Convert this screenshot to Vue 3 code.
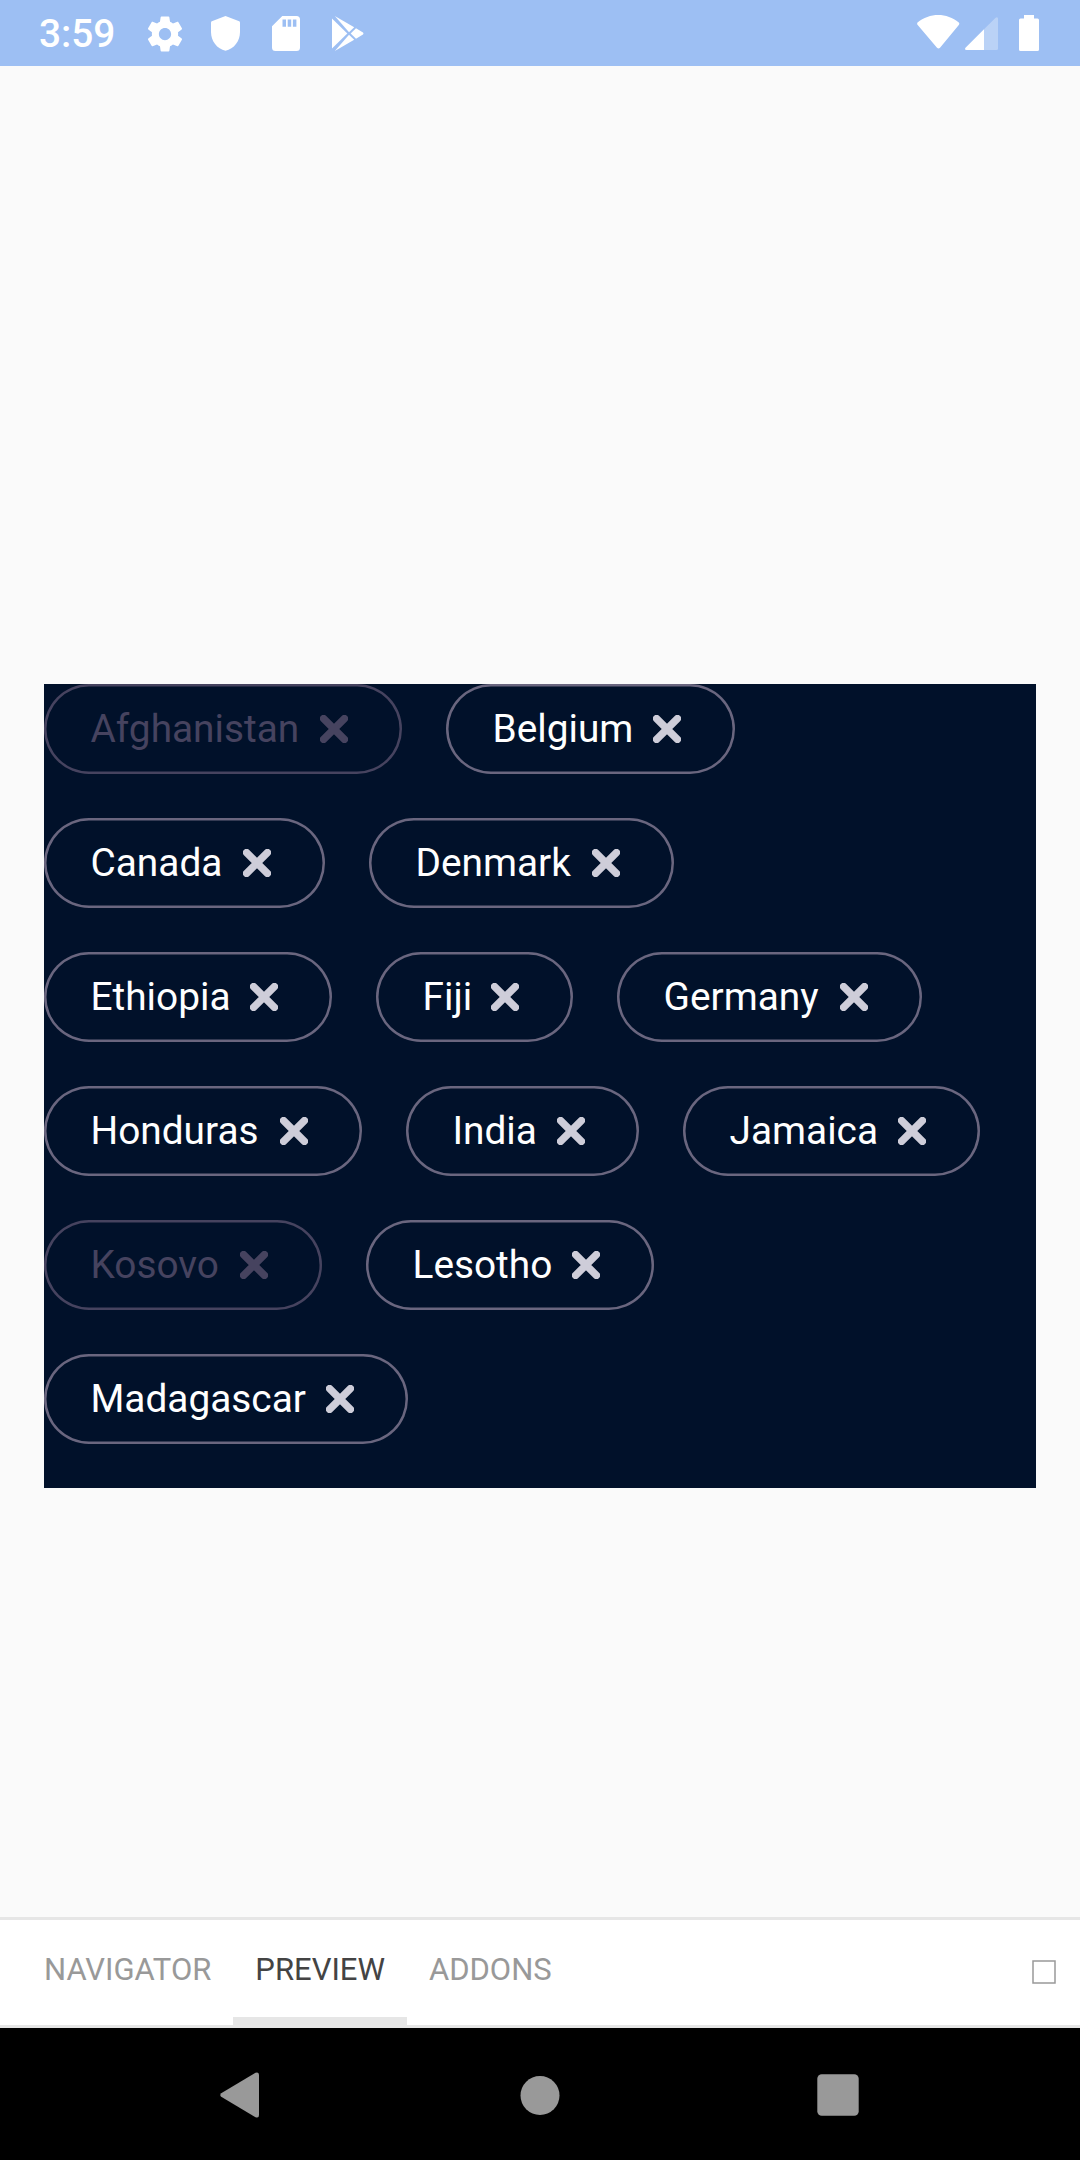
<script setup>
const rows = [
  [{ name: 'Afghanistan', width: 358, disabled: true }, { name: 'Belgium', width: 289 }],
  [{ name: 'Canada', width: 281 }, { name: 'Denmark', width: 305 }],
  [{ name: 'Ethiopia', width: 288 }, { name: 'Fiji', width: 197 }, { name: 'Germany', width: 305 }],
  [{ name: 'Honduras', width: 318 }, { name: 'India', width: 233 }, { name: 'Jamaica', width: 297 }],
  [{ name: 'Kosovo', width: 278, disabled: true }, { name: 'Lesotho', width: 288 }],
  [{ name: 'Madagascar', width: 364 }],
]
const tabs = ['NAVIGATOR', 'PREVIEW', 'ADDONS']
const activeTab = 'PREVIEW'
</script>

<template>
  <div class="screen">
    <header class="status">
      <span class="time">3:59</span>
      <svg class="gear" width="42" height="42" viewBox="0 0 24 24">
        <path d="M19.43 12.98c.04-.32.07-.64.07-.98s-.03-.66-.07-.98l2.11-1.65c.19-.15.24-.42.12-.64l-2-3.46c-.12-.22-.39-.3-.61-.22l-2.49 1c-.52-.4-1.08-.73-1.69-.98l-.38-2.65C14.46 2.18 14.25 2 14 2h-4c-.25 0-.46.18-.49.42l-.38 2.65c-.61.25-1.17.59-1.69.98l-2.49-1c-.23-.09-.49 0-.61.22l-2 3.46c-.13.22-.07.49.12.64l2.11 1.65c-.04.32-.07.65-.07.98s.03.66.07.98l-2.11 1.65c-.19.15-.24.42-.12.64l2 3.46c.12.22.39.3.61.22l2.49-1c.52.4 1.08.73 1.69.98l.38 2.65c.03.24.24.42.49.42h4c.25 0 .46-.18.49-.42l.38-2.65c.61-.25 1.17-.59 1.69-.98l2.49 1c.23.09.49 0 .61-.22l2-3.46c.12-.22.07-.49-.12-.64l-2.11-1.65zM12 15.5c-1.93 0-3.5-1.57-3.5-3.5s1.57-3.5 3.5-3.5 3.5 1.57 3.5 3.5-1.57 3.5-3.5 3.5z" />
      </svg>
      <svg class="shield" width="29" height="35" viewBox="0 0 29 35">
        <path d="M14.5 0L28.2 5.3Q29 5.7 29 6.5V16C29 25 23 33 14.5 34.7C6 33 0 25 0 16V6.5Q0 5.7.8 5.3Z" />
      </svg>
      <svg class="sd" width="28" height="35" viewBox="0 0 28 35">
        <path fill-rule="evenodd" d="M10.3 0H24.5Q28 0 28 3.5V31.5Q28 35 24.5 35H3.5Q0 35 0 31.5V10.3ZM10.5 3.5V10.7H14V3.5ZM15.7 3.5V10.7H19.2V3.5ZM20.9 3.5V10.7H24.4V3.5Z" />
      </svg>
      <svg class="play" width="32" height="35" viewBox="0 0 32 35">
        <path d="M0 2.4L15.3 17.5L0 32.6Z" />
        <path d="M2.8 0L22.2 11.2L17 16.2Z" />
        <path d="M2.8 35L22.2 23.8L17 18.8Z" />
        <path d="M24 12.3L31 16.5Q32 17.5 31 18.5L24 22.7L18.7 17.5Z" />
      </svg>
      <span class="spacer"></span>
      <svg class="wifi" width="43" height="34" viewBox="0 0 43 34">
        <path d="M.5 7.6Q-.3 8.8.7 10L20 32.7Q21.5 34.3 23 32.7L41.8 10Q42.8 8.8 41.8 7.6C30-2.4 12.5-2.4.5 7.6Z" />
      </svg>
      <svg class="signal" width="33" height="33" viewBox="0 0 33 33">
        <path opacity=".3" d="M19 12.3L30.6.7Q33-.7 33 2V31.5Q33 33 31.5 33H19Z" />
        <path d="M19 12.3V33H1.5Q-.8 32.6.5 30.7Z" />
      </svg>
      <svg class="battery" width="20" height="36" viewBox="0 0 20 36">
        <path d="M5 0H15V3.5H18.5Q20 3.5 20 5V34.5Q20 36 18.5 36H1.5Q0 36 0 34.5V5Q0 3.5 1.5 3.5H5Z" />
      </svg>
    </header>

    <main class="preview">
      <section class="panel">
        <div v-for="(row, i) in rows" :key="i" class="row">
          <div
            v-for="chip in row"
            :key="chip.name"
            class="chip"
            :class="{ disabled: chip.disabled }"
            :style="{ width: chip.width + 'px' }"
          >
            <span class="label">{{ chip.name }}</span>
            <svg class="cross" width="28" height="28" viewBox="0 0 28 28">
              <path d="M3.6 3.6L24.4 24.4M24.4 3.6L3.6 24.4" />
            </svg>
          </div>
        </div>
      </section>
    </main>

    <nav class="tabs">
      <div v-for="tab in tabs" :key="tab" class="tab" :class="{ active: tab === activeTab }">{{ tab }}</div>
      <span class="spacer"></span>
      <svg class="toggle" width="24" height="24" viewBox="0 0 24 24">
        <rect x="1" y="1" width="22" height="22" />
      </svg>
    </nav>

    <footer class="system">
      <svg width="40" height="46" viewBox="0 0 40 46">
        <path d="M1.2 21.2L35.5.8Q39-.6 39 3V43Q39 46.6 35.5 45.2L1.2 24.8Q-.6 23 1.2 21.2Z" />
      </svg>
      <svg width="42" height="40" viewBox="0 0 42 40"><circle cx="22" cy="20.5" r="19.5" /></svg>
      <svg width="42" height="42" viewBox="0 0 42 42"><rect x=".3" y=".3" width="41.4" height="41.4" rx="4.5" /></svg>
    </footer>
  </div>
</template>

<style>
body {
  margin: 0;
}
</style>

<style scoped>
.screen {
  display: flex;
  flex-direction: column;
  width: 1080px;
  height: 2160px;
  background: #fafafa;
  font-family: Roboto, sans-serif;
  overflow: hidden;
}
svg {
  display: block;
  flex: none;
}
.spacer {
  flex: 1;
}
.status {
  display: flex;
  align-items: flex-start;
  height: 66px;
  box-sizing: border-box;
  padding: 0 41px 0 39px;
  background: #9dbff3;
  color: #fff;
}
.status svg {
  fill: #fff;
  margin-top: 16px;
}
.time {
  width: 104.5px;
  font-size: 38.8px;
  font-weight: 500;
  line-height: 68px;
}
.status .gear {
  margin-top: 12.5px;
}
.status .shield {
  margin-left: 25.5px;
}
.status .sd {
  margin-left: 32px;
}
.status .play {
  margin-left: 32px;
}
.status .wifi {
  margin-top: 15px;
}
.status .signal {
  margin: 17px 21px 0 5.5px;
}
.status .battery {
  margin-top: 15px;
}
.preview {
  flex: 1;
  padding: 618px 44px 0;
}
.panel {
  background: #01112a;
}
.row {
  display: flex;
  gap: 44px;
  height: 134px;
}
.chip {
  display: flex;
  align-items: center;
  justify-content: space-between;
  height: 90px;
  box-sizing: border-box;
  padding: 0 54.500px 0 46.500px;
  box-shadow: inset 0 0 0 2.500px #6a667f;
  border-radius: 45px;
  color: #fff;
}
.label {
  font-size: 38.8px;
  line-height: 46px;
  white-space: nowrap;
}
.cross {
  fill: none;
  stroke: #cecdd9;
  stroke-width: 7.5;
  stroke-linecap: round;
}
.disabled {
  color: #46435f;
  box-shadow: inset 0 0 0 2.500px #46435f;
}
.disabled .cross {
  stroke: #46435f;
}
.tabs {
  display: flex;
  height: 111px;
  box-sizing: border-box;
  border-top: 3px solid #e6e6e6;
  border-bottom: 3px solid #e6e6e6;
  padding: 0 24px 0 22px;
  background: #fff;
}
.tab {
  box-sizing: border-box;
  padding: 0 22px;
  border-bottom: 8px solid transparent;
  color: #999;
  font-size: 31px;
  line-height: 100px;
}
.tab.active {
  color: #444;
  border-color: #e6e6e6;
}
.toggle {
  margin-top: 40px;
  fill: none;
  stroke: #999;
  stroke-width: 1.5;
}
.system {
  display: flex;
  align-items: center;
  justify-content: space-between;
  height: 132px;
  box-sizing: border-box;
  padding: 1px 221px 0 220px;
  background: #000;
  fill: #999;
}
</style>
